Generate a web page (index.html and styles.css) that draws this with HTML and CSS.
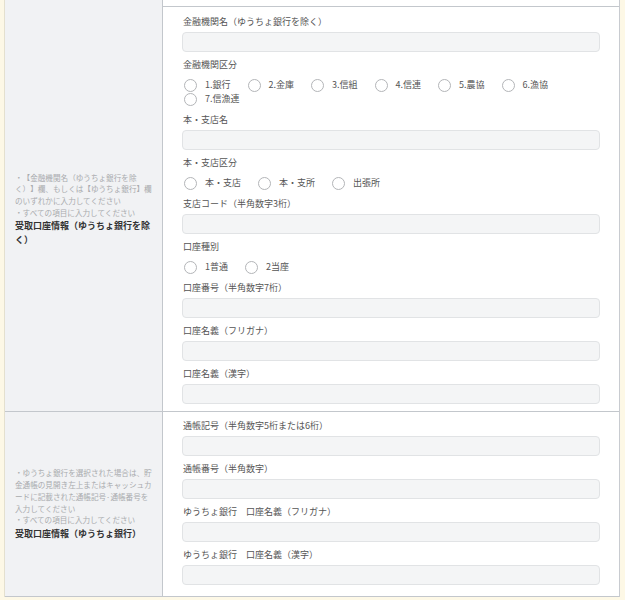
FILE: index.html
```html
<!DOCTYPE html>
<html lang="ja">
<head>
<meta charset="utf-8">
<link rel="stylesheet" href="styles.css">
</head>
<body>
<div class="page">
  <div class="table">
    <div class="row row-top">
      <div class="th"></div>
      <div class="td"></div>
    </div>

    <div class="row">
      <div class="th">
        <div class="th-inner">
          <p class="note">・【金融機関名（ゆうちょ銀行を除く）】欄、もしくは【ゆうちょ銀行】欄のいずれかに入力してください</p>
          <p class="note">・すべての項目に入力してください</p>
          <p class="title">受取口座情報（ゆうちょ銀行を除く）</p>
        </div>
      </div>
      <div class="td">
        <div class="field">
          <div class="label">金融機関名（ゆうちょ銀行を除く）</div>
          <div class="input"></div>
        </div>
        <div class="field radio-field">
          <div class="label">金融機関区分</div>
          <div class="radios">
            <span class="radio"><span class="circle"></span>1.銀行</span>
            <span class="radio"><span class="circle"></span>2.金庫</span>
            <span class="radio"><span class="circle"></span>3.信組</span>
            <span class="radio"><span class="circle"></span>4.信連</span>
            <span class="radio"><span class="circle"></span>5.農協</span>
            <span class="radio"><span class="circle"></span>6.漁協</span>
            <span class="radio"><span class="circle"></span>7.信漁連</span>
          </div>
        </div>
        <div class="field">
          <div class="label">本・支店名</div>
          <div class="input"></div>
        </div>
        <div class="field radio-field">
          <div class="label">本・支店区分</div>
          <div class="radios">
            <span class="radio"><span class="circle"></span>本・支店</span>
            <span class="radio"><span class="circle"></span>本・支所</span>
            <span class="radio"><span class="circle"></span>出張所</span>
          </div>
        </div>
        <div class="field">
          <div class="label">支店コード（半角数字3桁）</div>
          <div class="input"></div>
        </div>
        <div class="field radio-field">
          <div class="label">口座種別</div>
          <div class="radios">
            <span class="radio"><span class="circle"></span>1普通</span>
            <span class="radio"><span class="circle"></span>2当座</span>
          </div>
        </div>
        <div class="field">
          <div class="label">口座番号（半角数字7桁）</div>
          <div class="input"></div>
        </div>
        <div class="field">
          <div class="label">口座名義（フリガナ）</div>
          <div class="input"></div>
        </div>
        <div class="field">
          <div class="label">口座名義（漢字）</div>
          <div class="input"></div>
        </div>
      </div>
    </div>

    <div class="row row-yucho">
      <div class="th">
        <div class="th-inner">
          <p class="note">・ゆうちょ銀行を選択された場合は、貯金通帳の見開き左上またはキャッシュカードに記載された通帳記号·通帳番号を入力してください</p>
          <p class="note">・すべての項目に入力してください</p>
          <p class="title">受取口座情報（ゆうちょ銀行）</p>
        </div>
      </div>
      <div class="td">
        <div class="field">
          <div class="label">通帳記号（半角数字5桁または6桁）</div>
          <div class="input"></div>
        </div>
        <div class="field">
          <div class="label">通帳番号（半角数字）</div>
          <div class="input"></div>
        </div>
        <div class="field">
          <div class="label">ゆうちょ銀行　口座名義（フリガナ）</div>
          <div class="input"></div>
        </div>
        <div class="field">
          <div class="label">ゆうちょ銀行　口座名義（漢字）</div>
          <div class="input"></div>
        </div>
      </div>
    </div>
  </div>
</div>
</body>
</html>
```
FILE: styles.css
```css
html, body {
  margin: 0;
  padding: 0;
  background: #fdf8e6;
}

body {
  font-family: "Noto Sans CJK JP", "Noto Sans", sans-serif;
  color: #555;
  width: 625px;
  height: 600px;
  overflow: hidden;
  text-spacing-trim: space-all;
}

.page {
  padding-left: 4px;
  width: 616px;
}

.table {
  background: #fff;
  border-left: 1px solid #e4e0cf;
  border-right: 1px solid #c8cbd0;
}

.row {
  display: grid;
  grid-template-columns: 158px 1fr;
  border-bottom: 1px solid #c3c7cc;
}

.row-top {
  height: 6px;
}

.th {
  background: #f1f2f4;
  border-right: 1px solid #c3c7cc;
  display: flex;
  align-items: center;
  padding: 0 9px 0 10px;
}

.th-inner {
  width: 100%;
}

.note {
  margin: 0;
  font-size: 7.6px;
  line-height: 11.7px;
  color: #a9abae;
}

.title {
  margin: 1px 0 0;
  font-size: 9px;
  line-height: 13.5px;
  font-weight: bold;
  color: #333;
}

.td {
  padding: 8px 19px 1px 19px;
}

.row-yucho .td {
  padding-top: 7px;
  padding-bottom: 5px;
}

.field {
  margin-bottom: 6px;
}

.radio-field {
  margin-bottom: 7px;
}

.label {
  font-size: 9px;
  line-height: 14px;
  color: #555;
  padding-left: 1px;
  margin-bottom: 3px;
}

.radio-field .label {
  margin-bottom: 6px;
}

.input {
  height: 18px;
  background: #f4f5f6;
  border: 1px solid #e1e3e5;
  border-radius: 4px;
}

.radios {
  display: flex;
  flex-wrap: wrap;
}

.radio {
  display: inline-flex;
  align-items: center;
  height: 14px;
  font-size: 9px;
  line-height: 14px;
  color: #555;
  margin-left: 2px;
  margin-right: 15px;
}

.circle {
  width: 11px;
  height: 11px;
  border: 1px solid #b3b5b8;
  border-radius: 50%;
  background: #fff;
  margin-right: 8px;
  flex: none;
}
```
